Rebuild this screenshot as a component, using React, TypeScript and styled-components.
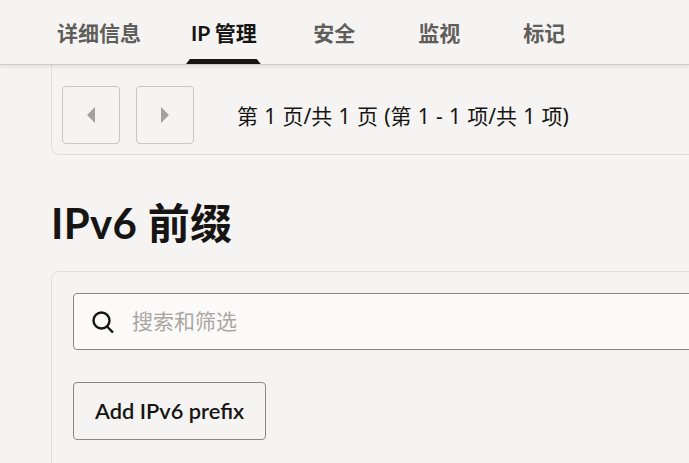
import React from 'react';
import styled, {createGlobalStyle} from 'styled-components';

const cjk = `Lato, 'Noto Sans CJK SC', sans-serif`;

const GlobalStyle = createGlobalStyle`
  html, body {
    margin: 0;
    padding: 0;
    height: 100%;
    overflow: hidden;
    background: #f5f4f2;
  }
`;

const Page = styled.div`
  width: 689px;
  height: 463px;
  overflow: hidden;
  position: relative;
  font-family: ${cjk};
  color: #161513;
  background: #f5f4f2;
`;

const TabBar = styled.nav`
  position: relative;
  z-index: 1;
  display: flex;
  height: 64px;
  padding-left: 32px;
  background: #f5f4f2;
  border-bottom: 1px solid #d0cecb;
  box-shadow: 0 2px 4px rgba(0, 0, 0, 0.08);
`;

const Tab = styled.div<{$active?: boolean}>`
  position: relative;
  display: flex;
  align-items: center;
  justify-content: center;
  box-sizing: border-box;
  min-width: 105px;
  padding: 0 25px 1px;
  font-size: 21px;
  font-weight: 700;
  white-space: nowrap;
  color: ${(p) => (p.$active ? '#161513' : '#5f5e5b')};

  ${(p) =>
    p.$active &&
    `
    &::after {
      content: '';
      position: absolute;
      left: 20px;
      right: 21px;
      bottom: 0;
      height: 5px;
      background: #161513;
      clip-path: polygon(4px 0, calc(100% - 4px) 0, 100% 100%, 0 100%);
    }
  `}
`;

const Content = styled.main`
  padding-left: 51px;
`;

const PagerPanel = styled.section`
  display: flex;
  align-items: center;
  box-sizing: border-box;
  height: 90px;
  margin-right: -60px;
  padding: 11px 10px 0;
  border: 1px solid #dfdedb;
  border-top: 0;
  border-radius: 0 0 0 8px;
`;

const PageButton = styled.div`
  display: flex;
  align-items: center;
  justify-content: center;
  box-sizing: border-box;
  width: 58px;
  height: 58px;
  margin-right: 16px;
  border: 1px solid #c9c7c4;
  border-radius: 4px;
`;

const PageText = styled.span`
  margin-left: 27px;
  font-family: 'Noto Sans', 'Noto Sans CJK SC', sans-serif;
  font-size: 21px;
  word-spacing: 0.8px;
  white-space: nowrap;
`;

const Heading = styled.h1`
  margin: 41px 0 21px;
  font-size: 42px;
  line-height: 54px;
  font-weight: 700;
  letter-spacing: 0.3px;
`;

const FilterPanel = styled.section`
  box-sizing: border-box;
  height: 220px;
  margin-right: -60px;
  padding: 21px;
  border: 1px solid #dfdedb;
  border-radius: 8px;
`;

const SearchBox = styled.div`
  display: flex;
  align-items: center;
  box-sizing: border-box;
  height: 57px;
  padding-left: 18px;
  background: #fbfaf8;
  border: 1px solid #8a8886;
  border-radius: 4px;
`;

const Placeholder = styled.span`
  margin-left: 18px;
  padding-bottom: 3px;
  font-size: 21px;
  color: #a9a7a4;
`;

const AddButton = styled.button`
  display: block;
  box-sizing: border-box;
  width: 193px;
  height: 58px;
  margin-top: 32px;
  padding: 0 0 2px;
  font-family: ${cjk};
  font-size: 21.8px;
  font-weight: 600;
  color: #161513;
  background: transparent;
  border: 1px solid #8a8886;
  border-radius: 4px;
`;

const Triangle = ({dir}: {dir: 'left' | 'right'}) => (
  <svg width="10" height="16" viewBox="0 0 10 16">
    <path
      d={dir === 'left' ? 'M9 0V16L1 8Z' : 'M1 0V16L9 8Z'}
      fill="#a3a19e"
    />
  </svg>
);

const SearchIcon = () => (
  <svg width="22" height="22" viewBox="0 0 22 22" fill="none">
    <circle cx="9.5" cy="9.5" r="8" stroke="#161513" strokeWidth="2.4" />
    <path d="M15 15.5L21 21.5" stroke="#161513" strokeWidth="2.4" />
  </svg>
);

export default function App() {
  return (
    <Page>
      <GlobalStyle />
      <TabBar>
        <Tab>详细信息</Tab>
        <Tab $active>IP 管理</Tab>
        <Tab>安全</Tab>
        <Tab>监视</Tab>
        <Tab>标记</Tab>
      </TabBar>
      <Content>
        <PagerPanel>
          <PageButton>
            <Triangle dir="left" />
          </PageButton>
          <PageButton>
            <Triangle dir="right" />
          </PageButton>
          <PageText>第 1 页/共 1 页 (第 1 - 1 项/共 1 项)</PageText>
        </PagerPanel>
        <Heading>IPv6 前缀</Heading>
        <FilterPanel>
          <SearchBox>
            <SearchIcon />
            <Placeholder>搜索和筛选</Placeholder>
          </SearchBox>
          <AddButton>Add IPv6 prefix</AddButton>
        </FilterPanel>
      </Content>
    </Page>
  );
}
